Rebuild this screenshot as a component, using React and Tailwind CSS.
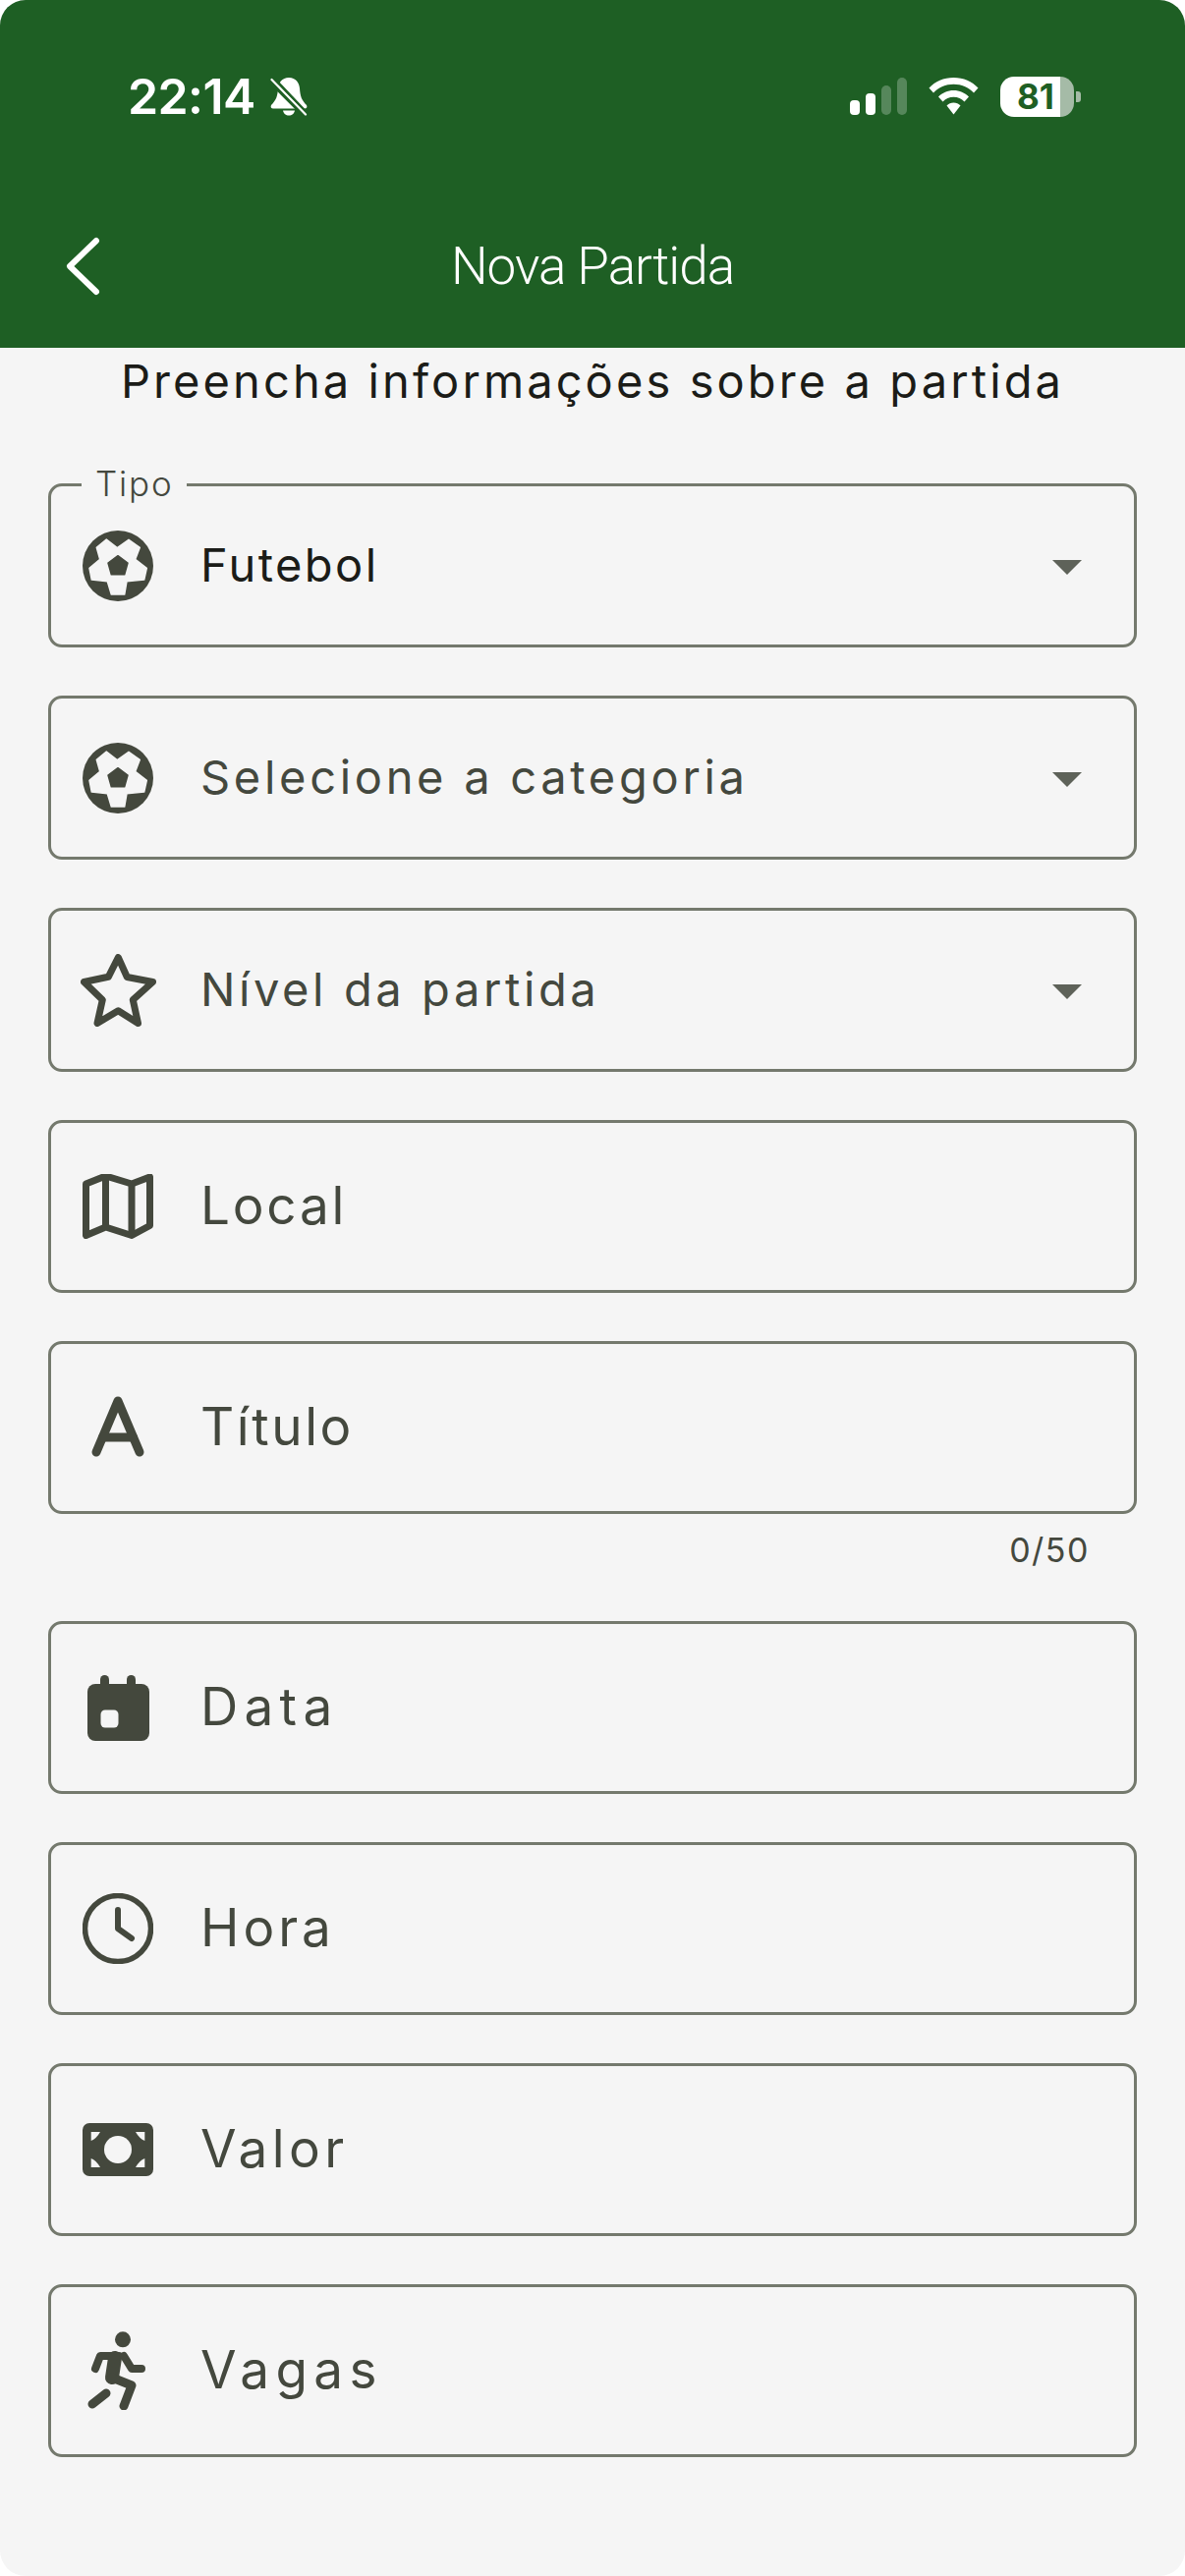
import React from "react";

const BG = "#f5f5f5";

function Ball() {
  return (
    <svg width="72" height="72" viewBox="0 0 72 72">
      <circle cx="36" cy="36" r="36" fill="#44483d" />
      <path d="M35.300 17.700L47 9.300L58.300 17.300L53.700 29.300L65.300 38.300L62.700 50L45 51.700L42.700 65H29.300L25.300 51.700L9.300 50L7 38.300L17.700 29.300L14.300 17.300L24.300 9Z" fill={BG} stroke={BG} strokeWidth="1.500" strokeLinejoin="round" />
      <path d="M36 25.700L46 33L42.700 44.700H29.300L26 33Z" fill="#44483d" stroke="#44483d" strokeWidth="1.500" strokeLinejoin="round" />
    </svg>
  );
}
function Star() {
  return (
    <svg width="77" height="74" viewBox="0 0 77 74" fill="none" stroke="#44483d" strokeWidth="7" strokeLinejoin="round">
      <path d="M38.300 3.500L47.300 23.500L73.500 28.500L53.300 46.700L58.500 70.500L38.300 57.700L17 70.500L22.300 46.700L3.500 28.500L28.300 23.300Z" />
    </svg>
  );
}
function MapIcon() {
  return (
    <svg width="72" height="66" viewBox="0 0 72 66" fill="none" stroke="#44483d" strokeWidth="7" strokeLinejoin="round">
      <path d="M3.500 10L23.500 2L50 10L68.500 3V52.500L50 62.500L23.500 54L3.500 62.500Z" />
      <path d="M23.500 2V54M50 10V62.500" />
    </svg>
  );
}
function LetterA() {
  return (
    <svg width="88" height="88" viewBox="0 0 88 88" fill="none" stroke="#44483d" strokeWidth="9" strokeLinecap="round" strokeLinejoin="round">
      <path d="M22 69L44 17L66 69" />
      <path d="M28.500 54H59.500" />
    </svg>
  );
}
function Calendar() {
  return (
    <svg width="63" height="67" viewBox="0 0 63 67">
      <rect x="13" y="0" width="9" height="16" rx="4.500" fill="#44483d" />
      <rect x="40" y="0" width="9" height="16" rx="4.500" fill="#44483d" />
      <rect x="0" y="9" width="63" height="58" rx="8" fill="#44483d" />
      <rect x="13.500" y="35.500" width="18" height="18" rx="4.500" fill={BG} />
    </svg>
  );
}
function Clock() {
  return (
    <svg width="72" height="72" viewBox="0 0 72 72" fill="none" stroke="#44483d" strokeLinecap="round" strokeLinejoin="round">
      <circle cx="36" cy="36" r="33.500" strokeWidth="5.500" />
      <path d="M36 17V36L50 46" strokeWidth="6" />
    </svg>
  );
}
function Money() {
  return (
    <svg width="72" height="54" viewBox="0 0 72 54">
      <rect width="72" height="54" rx="7" fill="#44483d" />
      <circle cx="36" cy="27" r="14" fill={BG} />
      <path d="M8.700 9H18Q14 16 8.700 18Z" fill={BG} />
      <path d="M63.300 9H54Q58 16 63.300 18Z" fill={BG} />
      <path d="M8.700 45H18Q14 38 8.700 36Z" fill={BG} />
      <path d="M63.300 45H54Q58 38 63.300 36Z" fill={BG} />
    </svg>
  );
}
function Run() {
  return (
    <svg width="63" height="80" viewBox="0 0 63 80" fill="none" stroke="#44483d" strokeLinecap="round" strokeLinejoin="round">
      <circle cx="36" cy="8.300" r="8" fill="#44483d" stroke="none" />
      <path d="M8 38L13 25H32" strokeWidth="8" />
      <path d="M28 27L25 47" strokeWidth="14" />
      <path d="M37 25L45 38H55" strokeWidth="8" />
      <path d="M25 47L45 55L37 76" strokeWidth="9" />
      <path d="M19 63L5 74" strokeWidth="9" />
    </svg>
  );
}
function Bell() {
  return (
    <svg width="40" height="40" viewBox="0 0 40 40">
      <path d="M20 1C13 1 9.500 6 9 12C8.500 20 7 24 2 29C1 31 2 32.500 4 32.500H36C38 32.500 39 31 38 29C33 24 31.500 20 31 12C30.500 6 27 1 20 1Z" fill="#fff" />
      <path d="M14 34.500H26C25.500 37.500 23 39.500 20 39.500S14.500 37.500 14 34.500Z" fill="#fff" />
      <path d="M1 5L35 39" stroke="#1e5f24" strokeWidth="4" />
      <path d="M4 1L39 38" stroke="#1e5f24" strokeWidth="3" />
      <path d="M2.500 3L37 38.500" stroke="#fff" strokeWidth="2.200" strokeLinecap="round" />
    </svg>
  );
}

function Field({ icon, label, h, select, active, legend, track }) {
  return (
    <div className={`relative flex items-center pl-6 pr-[53px] border-[3px] border-[#74796d] rounded-[14px] ${h}`}>
      {legend && (
        <span className="absolute left-[31px] top-[-25px] px-[14px] bg-[#f5f5f5] text-[35px] leading-[44px] tracking-[1.800px] font-light text-[#44483e]">
          {legend}
        </span>
      )}
      <span className="flex w-[88px] h-[88px] items-center justify-center shrink-0">{icon}</span>
      <span className={`ml-[40px] -mt-[2px] flex-1 font-normal ${track} ${active ? "text-[#1b1c18]" : "text-[#44483e]"}`}>{label}</span>
      {select && (
        <svg width="30" height="16" viewBox="0 0 30 16" className="shrink-0 mt-[5px]">
          <path d="M0 0H30L15 15Z" fill="#5e6259" />
        </svg>
      )}
    </div>
  );
}

export default function App() {
  const sel = "text-[47px] leading-[60px]";
  const inp = "text-[53px] leading-[68px]";
  return (
    <div className="w-[1206px] h-[2622px] bg-[#f5f5f5] font-['Inter',sans-serif] overflow-hidden rounded-[26px]">
      <header className="h-[354px] bg-[#1e5f24] text-white flex flex-col">
        <div className="flex items-center justify-between h-[40px] mt-[78px] pl-[130px] pr-[106px]">
          <div className="flex items-center gap-[14px]">
            <span className="text-[50px] leading-[50px] font-semibold tracking-[-0.600px]">22:14</span>
            <Bell />
          </div>
          <div className="flex items-center">
            <svg width="58" height="38" viewBox="0 0 58 38" className="mr-[22px]">
              <rect x="0" y="23" width="10" height="15" rx="4" fill="#fff" />
              <rect x="16" y="16" width="10" height="22" rx="4" fill="#fff" />
              <rect x="32" y="8" width="10" height="30" rx="5" fill="#fff" fillOpacity="0.25" />
              <rect x="48" y="0" width="10" height="38" rx="5" fill="#fff" fillOpacity="0.25" />
            </svg>
            <svg width="51" height="38" viewBox="0 0 51 38" className="mr-[22px]">
              <path d="M25.500 0C15.500 0 6.700 4 0.500 10.500L5 15.500C10.200 10 17.500 6.800 25.500 6.800S40.800 10 46 15.500L50.500 10.500C44.300 4 35.500 0 25.500 0Z" fill="#fff" />
              <path d="M25.500 13C19.500 13 14 15.500 10 19.500L14.500 24.500C17.300 21.600 21.200 19.800 25.500 19.800S33.700 21.600 36.500 24.500L41 19.500C37 15.500 31.500 13 25.500 13Z" fill="#fff" />
              <path d="M25.500 25.500C22.800 25.500 20.300 26.600 18.500 28.500L25.500 37.500L32.500 28.500C30.700 26.600 28.200 25.500 25.500 25.500Z" fill="#fff" />
            </svg>
            <div className="flex w-[75px] h-[41px]">
              <span className="flex w-[61px] items-center pl-[17px] bg-white rounded-l-[14px] text-[#1e5f24] text-[35px] font-bold leading-[41px]">81</span>
              <span className="w-[14px] bg-[#a5bba7] rounded-r-[14px]" />
            </div>
            <span className="w-[5px] h-[11px] ml-[2px] rounded-r-[3px] bg-[#a5bba7]" />
          </div>
        </div>
        <div className="relative flex items-center justify-center mt-[118px] h-[70px]">
          <svg width="36" height="60" viewBox="0 0 36 60" className="absolute left-[66px] top-[5px]" fill="none" stroke="#fff" strokeWidth="6" strokeLinecap="round" strokeLinejoin="round">
            <path d="M32 4L5 30L32 56" />
          </svg>
          <h1 className="text-[53px] leading-[70px] font-light tracking-[-1px] font-['Roboto',sans-serif]">Nova Partida</h1>
        </div>
      </header>
      <p className="text-center text-[47px] leading-[68px] font-normal text-[#1b1c18] tracking-[3.100px]">Preencha informações sobre a partida</p>
      <main className="flex flex-col px-[49px] mt-[70px]">
        <div className="flex flex-col gap-[49px]">
          <Field h="h-[167px]" legend="Tipo" select active label="Futebol" track={`${sel} tracking-[2.400px]`} icon={<Ball />} />
          <Field h="h-[167px]" select label="Selecione a categoria" track={`${sel} tracking-[3.700px]`} icon={<Ball />} />
          <Field h="h-[167px]" select label="Nível da partida" track={`${sel} tracking-[3.600px]`} icon={<Star />} />
          <Field h="h-[176px]" label="Local" track={`${inp} tracking-[2.800px]`} icon={<MapIcon />} />
          <Field h="h-[176px]" label="Título" track={`${inp} tracking-[2.600px]`} icon={<LetterA />} />
        </div>
        <div className="text-right pr-[48px] text-[34px] leading-[44px] font-normal text-[#44483e] tracking-[1.500px] mt-[15px] mb-[50px]">0/50</div>
        <div className="flex flex-col gap-[49px]">
          <Field h="h-[176px]" label="Data" track={`${inp} tracking-[6.300px]`} icon={<Calendar />} />
          <Field h="h-[176px]" label="Hora" track={`${inp} tracking-[4px]`} icon={<Clock />} />
          <Field h="h-[176px]" label="Valor" track={`${inp} tracking-[4.500px]`} icon={<Money />} />
          <Field h="h-[176px]" label="Vagas" track={`${inp} tracking-[6.400px]`} icon={<Run />} />
        </div>
      </main>
    </div>
  );
}
